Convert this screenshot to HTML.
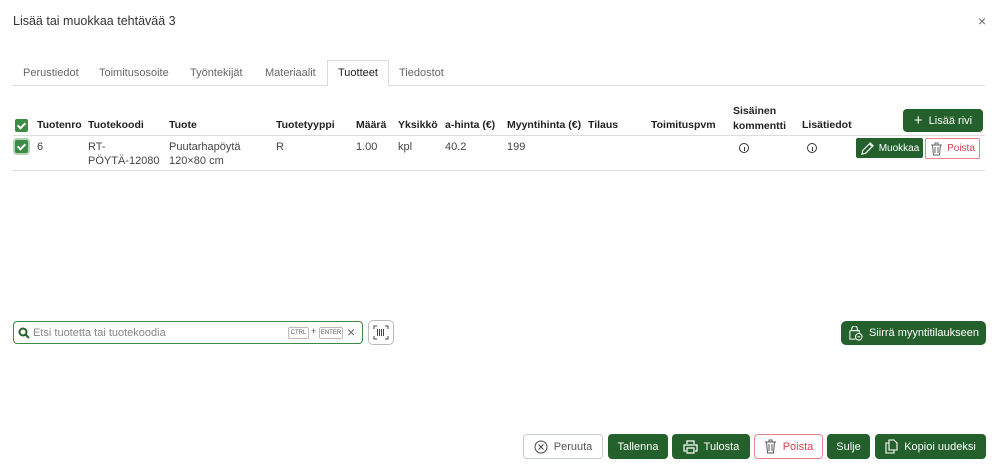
<!DOCTYPE html>
<html><head><meta charset="utf-8"><style>
*{box-sizing:border-box;margin:0;padding:0}
body{width:998px;height:470px;background:#fff;font-family:"Liberation Sans",sans-serif;color:#333;position:relative;overflow:hidden;font-size:11px}
.a{position:absolute;white-space:nowrap}
.tab{position:absolute;top:67px;font-size:11px;color:#666}
.h{position:absolute;top:119px;font-weight:bold;font-size:10.5px;color:#222}
.c{position:absolute;top:140px;font-size:11px;color:#444;line-height:14px}
.btn{position:absolute;border-radius:4px;display:flex;align-items:center;justify-content:center;font-size:11px;gap:6px}
.g{background:#24602c;color:#fff}
.r{border:1px solid #e9848c;color:#d9434f;background:#fff}
.cb{position:absolute;width:13px;height:13px;background:#3c8b46;border-radius:2px}
.cb:after{content:"";position:absolute;left:4px;top:2px;width:3px;height:6px;border:solid #fff;border-width:0 2px 2px 0;transform:rotate(45deg)}
.info{position:absolute;top:143px;width:10px;height:10px;border:1px solid #333;border-radius:50%}
.info:after{content:"";position:absolute;left:3.5px;top:3px;width:1px;height:4px;background:#333}
</style></head><body>
<div class="a" style="left:13px;top:14px;font-size:12.5px;color:#333">Lisää tai muokkaa tehtävää 3</div>
<div class="a" style="left:978px;top:13px;font-size:14px;color:#666">×</div>
<div class="a" style="left:13px;top:85px;width:972px;height:1px;background:#ddd"></div>
<div class="a" style="left:327px;top:60px;width:62px;height:26px;border:1px solid #ddd;border-bottom:none;background:#fff"></div>
<div class="tab" style="left:23px">Perustiedot</div>
<div class="tab" style="left:99px">Toimitusosoite</div>
<div class="tab" style="left:190px">Työntekijät</div>
<div class="tab" style="left:265px">Materiaalit</div>
<div class="tab" style="left:338px;color:#222">Tuotteet</div>
<div class="tab" style="left:399px">Tiedostot</div>

<div class="cb" style="left:15px;top:119px"></div>
<div class="h" style="left:37px">Tuotenro</div>
<div class="h" style="left:88px">Tuotekoodi</div>
<div class="h" style="left:169px">Tuote</div>
<div class="h" style="left:276px">Tuotetyyppi</div>
<div class="h" style="left:356px">Määrä</div>
<div class="h" style="left:398px">Yksikkö</div>
<div class="h" style="left:445px">a-hinta (€)</div>
<div class="h" style="left:507px">Myyntihinta (€)</div>
<div class="h" style="left:588px">Tilaus</div>
<div class="h" style="left:651px">Toimituspvm</div>
<div class="h" style="left:733px;top:104px;line-height:15px">Sisäinen<br>kommentti</div>
<div class="h" style="left:802px">Lisätiedot</div>
<div class="btn g" style="left:903px;top:109px;width:80px;height:23px"><span style="font-size:15px">+</span>Lisää rivi</div>
<div class="a" style="left:13px;top:135px;width:972px;height:1px;background:#ddd"></div>
<div class="cb" style="left:15px;top:140px;box-shadow:0 0 0 2px #b5d3b8"></div>
<div class="c" style="left:37px">6</div>
<div class="c" style="left:88px">RT-<br>PÖYTÄ-12080</div>
<div class="c" style="left:169px">Puutarhapöytä<br>120×80 cm</div>
<div class="c" style="left:276px">R</div>
<div class="c" style="left:356px">1.00</div>
<div class="c" style="left:398px">kpl</div>
<div class="c" style="left:445px">40.2</div>
<div class="c" style="left:507px">199</div>
<div class="info" style="left:739px"></div>
<div class="info" style="left:807px"></div>
<div class="btn g" style="left:856px;top:138px;width:67px;height:20px;border-radius:2px;font-size:10px;gap:4px"><svg width="15" height="15" viewBox="0 0 16 16" fill="none" stroke="#fff" stroke-width="1.2"><path d="M2 14l1-4 8-8 3 3-8 8z M10 3l3 3"/></svg>Muokkaa</div>
<div class="btn r" style="left:925px;top:138px;width:55px;height:21px;border-radius:2px;font-size:10px;gap:4px"><svg width="13" height="14" viewBox="0 0 13 14" fill="none" stroke="#666" stroke-width="1"><path d="M1 3h11M5 3V1h3v2M2.5 3l1 10h6l1-10M5 5v6M8 5v6"/></svg>Poista</div>
<div class="a" style="left:13px;top:170px;width:972px;height:1px;background:#ddd"></div>

<div class="a" style="left:13px;top:321px;width:350px;height:23px;border:1px solid #3c8b46;border-radius:4px"></div>
<svg class="a" style="left:18px;top:327px" width="12" height="12" viewBox="0 0 12 12" fill="none" stroke="#24602c" stroke-width="2"><circle cx="5" cy="5" r="3.5"/><path d="M7.5 7.5l3.5 3.5"/></svg>
<div class="a" style="left:33px;top:327px;font-size:11px;color:#888">Etsi tuotetta tai tuotekoodia</div>
<div class="a" style="left:288px;top:327px;width:21px;height:12px;border:1px solid #bbb;border-radius:2px;font-size:6px;color:#555;text-align:center;line-height:11px">CTRL</div>
<div class="a" style="left:311px;top:326px;font-size:9px;color:#555">+</div>
<div class="a" style="left:319px;top:327px;width:24px;height:12px;border:1px solid #bbb;border-radius:2px;font-size:6px;color:#555;text-align:center;line-height:11px">ENTER</div>
<div class="a" style="left:347px;top:324px;font-size:14px;color:#666">×</div>
<div class="a" style="left:368px;top:320px;width:26px;height:25px;border:1px solid #bbb;border-radius:5px"></div>
<svg class="a" style="left:373px;top:325px" width="16" height="15" viewBox="0 0 16 15" fill="none" stroke="#444" stroke-width="1"><path d="M1 4V1h3M12 1h3v3M15 11v3h-3M4 14H1v-3M4.5 4v7M6.5 4v7M8.5 4v7M10.5 4v7"/></svg>
<div class="btn g" style="left:841px;top:321px;width:145px;height:24px;border-radius:5px"><svg width="15" height="15" viewBox="0 0 16 16" fill="none" stroke="#fff" stroke-width="1.1"><path d="M4 5V3a3 3 0 016 0v2M2 5h10v3M2 5v9h6"/><circle cx="11.5" cy="11.5" r="3.5"/><path d="M10 11.5h3"/></svg>Siirrä myyntitilaukseen</div>

<div class="btn" style="left:523px;top:434px;width:80px;height:25px;border:1px solid #c5ccd3;color:#555;background:#fff"><svg width="14" height="14" viewBox="0 0 14 14" fill="none" stroke="#444" stroke-width="1"><circle cx="7" cy="7" r="6"/><path d="M4.5 4.5l5 5M9.5 4.5l-5 5"/></svg>Peruuta</div>
<div class="btn g" style="left:608px;top:434px;width:60px;height:25px">Tallenna</div>
<div class="btn g" style="left:672px;top:434px;width:78px;height:25px"><svg width="15" height="14" viewBox="0 0 15 14" fill="none" stroke="#fff" stroke-width="1.2"><path d="M4 4V1h7v3M3 11H1V5h13v6h-2M4 8h7v5H4z"/></svg>Tulosta</div>
<div class="btn r" style="left:754px;top:434px;width:69px;height:25px"><svg width="13" height="15" viewBox="0 0 13 15" fill="none" stroke="#555" stroke-width="1"><path d="M1 3h11M5 3V1h3v2M2.5 3l1 11h6l1-11M5 5v7M8 5v7"/></svg>Poista</div>
<div class="btn g" style="left:827px;top:434px;width:43px;height:25px">Sulje</div>
<div class="btn g" style="left:875px;top:434px;width:111px;height:25px"><svg width="13" height="15" viewBox="0 0 13 15" fill="none" stroke="#fff" stroke-width="1.1"><path d="M4 1h5l3 3v7H4z M4 4H1v10h8v-3"/></svg>Kopioi uudeksi</div>
</body></html>
